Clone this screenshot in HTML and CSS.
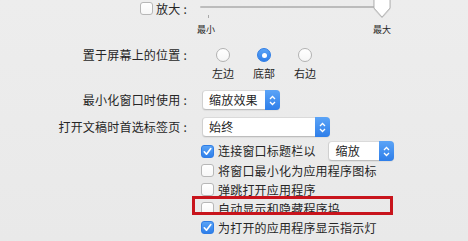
FILE: index.html
```
<!DOCTYPE html>
<html lang="zh-CN">
<head>
<meta charset="utf-8">
<link rel="stylesheet" href="styles.css">
</head>
<body>
<div class="panel">
  <div class="row row-zoom">
    <div class="label label-top"><span class="checkbox"></span><span class="gap3"></span>放大<span class="colon">:</span></div>
    <div class="slider">
      <div class="track"></div>
      <span class="tick"></span>
      <svg class="knob" width="20" height="21" viewBox="0 0 20 21"><path d="M2,-2 H18 V10 L10,19 L2,10 Z" fill="#ffffff" stroke="#b4b4b4" stroke-width="1"/></svg>
      <div class="slider-labels"><span>最小</span><span>最大</span></div>
    </div>
  </div>

  <div class="row row-position">
    <div class="label label-top">置于屏幕上的位置<span class="colon">:</span></div>
    <div class="radios">
      <div class="radio-item"><span class="radio"></span><span class="radio-label">左边</span></div>
      <div class="radio-item"><span class="radio selected"></span><span class="radio-label">底部</span></div>
      <div class="radio-item"><span class="radio"></span><span class="radio-label">右边</span></div>
    </div>
  </div>

  <div class="row row-min">
    <div class="label">最小化窗口时使用<span class="colon">:</span></div>
    <div class="popup popup-effect"><span class="value">缩放效果</span><span class="stepper"><svg width="7" height="11" viewBox="0 0 7 11"><path d="M1,4 L3.5,1.5 L6,4 M1,7 L3.5,9.5 L6,7" fill="none" stroke="#fff" stroke-width="1.3"/></svg></span></div>
  </div>

  <div class="row row-tabs">
    <div class="label">打开文稿时首选标签页<span class="colon">:</span></div>
    <div class="popup popup-tabs"><span class="value">始终</span><span class="stepper"><svg width="7" height="11" viewBox="0 0 7 11"><path d="M1,4 L3.5,1.5 L6,4 M1,7 L3.5,9.5 L6,7" fill="none" stroke="#fff" stroke-width="1.3"/></svg></span></div>
  </div>

  <div class="row row-opt row-dbl">
    <div class="opt">
      <span class="checkbox checked"><svg width="11" height="11" viewBox="0 0 11 11"><path d="M2.3,5.8 L4.5,8.2 L8.8,2.6" fill="none" stroke="#fff" stroke-width="1.7" stroke-linecap="round" stroke-linejoin="round"/></svg></span>
      <span class="opt-text">连接窗口标题栏以</span>
      <div class="popup popup-dbl"><span class="value">缩放</span><span class="stepper"><svg width="7" height="11" viewBox="0 0 7 11"><path d="M1,4 L3.5,1.5 L6,4 M1,7 L3.5,9.5 L6,7" fill="none" stroke="#fff" stroke-width="1.3"/></svg></span></div>
    </div>
  </div>

  <div class="row row-opt">
    <div class="opt"><span class="checkbox"></span><span class="opt-text">将窗口最小化为应用程序图标</span></div>
  </div>
  <div class="row row-opt">
    <div class="opt"><span class="checkbox"></span><span class="opt-text">弹跳打开应用程序</span></div>
  </div>
  <div class="row row-opt">
    <div class="opt highlight"><span class="checkbox"></span><span class="opt-text">自动显示和隐藏程序坞</span></div>
  </div>
  <div class="row row-opt">
    <div class="opt">
      <span class="checkbox checked"><svg width="11" height="11" viewBox="0 0 11 11"><path d="M2.3,5.8 L4.5,8.2 L8.8,2.6" fill="none" stroke="#fff" stroke-width="1.7" stroke-linecap="round" stroke-linejoin="round"/></svg></span>
      <span class="opt-text">为打开的应用程序显示指示灯</span>
    </div>
  </div>
</div>
</body>
</html>
```

FILE: styles.css
```
html, body {
  margin: 0;
  padding: 0;
}
body {
  width: 468px;
  height: 241px;
  overflow: hidden;
  background: linear-gradient(180deg, #ededed 0%, #e9e9e9 100%);
  font-family: "Noto Sans CJK SC", "Noto Sans", sans-serif;
  font-size: 12px;
  color: #262626;
  letter-spacing: 0.2px;
}
.panel {
  display: flex;
  flex-direction: column;
}
.row {
  display: grid;
  grid-template-columns: 188px 1fr;
  column-gap: 12px;
  align-items: center;
}
.label {
  display: flex;
  justify-content: flex-end;
  align-items: center;
  line-height: 14px;
  white-space: nowrap;
}
.label-top {
  align-self: start;
}
.colon {
  margin-left: 3px;
  margin-right: 1px;
}
.gap3 {
  width: 3px;
}

/* row 1: zoom slider */
.row-zoom {
  height: 36px;
  align-items: start;
}
.row-zoom .label {
  line-height: 17px;
}
.slider {
  position: relative;
  width: 194px;
}
.track {
  margin-top: 6px;
  width: 186px;
  height: 2px;
  border-radius: 1px;
  background: #bcbcbc;
}
.tick {
  position: absolute;
  left: 8px;
  top: 15px;
  width: 1px;
  height: 3px;
  background: #a8a8a8;
}
.knob {
  position: absolute;
  left: 172px;
  top: -2px;
  filter: drop-shadow(0 1px 0.5px rgba(0,0,0,0.12));
}
.slider-labels {
  display: flex;
  justify-content: space-between;
  margin-top: 16px;
  margin-left: -3px;
  width: 194px;
  font-size: 9px;
  line-height: 11px;
  letter-spacing: 0;
}

/* row 2: position radios */
.row-position {
  margin-top: 12px;
  align-items: start;
}
.radios {
  display: flex;
  gap: 21px;
  margin-left: 13px;
}
.radio-item {
  display: flex;
  flex-direction: column;
  align-items: center;
  width: 20px;
}
.radio {
  width: 14px;
  height: 14px;
  box-sizing: border-box;
  border-radius: 50%;
  border: 1px solid #b2b2b2;
  background: linear-gradient(#ffffff, #f6f6f6);
  display: flex;
  align-items: center;
  justify-content: center;
}
.radio.selected {
  border-color: #2f7de6;
  background: linear-gradient(#5aa3f6, #2f7fe9);
}
.radio.selected::after {
  content: "";
  width: 5px;
  height: 5px;
  border-radius: 50%;
  background: #ffffff;
}
.radio-label {
  margin-top: 5px;
  font-size: 11px;
  line-height: 13px;
  white-space: nowrap;
  letter-spacing: 0;
}

/* popups */
.popup {
  display: flex;
  align-items: center;
  height: 20px;
  box-sizing: border-box;
  background: #ffffff;
  border: 1px solid #d0d0d0;
  border-top-color: #dadada;
  border-bottom-color: #bdbdbd;
  border-radius: 4px;
  box-shadow: 0 1px 1px rgba(0,0,0,0.06);
  padding-left: 6px;
  line-height: 16px;
}
.popup .value {
  flex: 1;
  white-space: nowrap;
}
.stepper {
  align-self: stretch;
  width: 15px;
  margin: -1px -1px -1px 0;
  border-radius: 0 4px 4px 0;
  background: linear-gradient(#5ba4f7, #2e7ee9);
  display: flex;
  align-items: center;
  justify-content: center;
}
.row-min {
  margin-top: 10px;
}
.popup-effect {
  width: 78px;
  margin-left: 2px;
}
.row-tabs {
  margin-top: 7px;
}
.popup-tabs {
  width: 128px;
  margin-left: 2px;
}
.popup-dbl {
  width: 66px;
  margin-left: 12px;
  padding-left: 7px;
}

/* checkbox rows */
.row-opt {
  height: 19px;
}
.row-dbl {
  margin-top: 4px;
  height: 20px;
}
.opt {
  grid-column: 2;
  display: flex;
  align-items: center;
  height: 19px;
  margin-left: 1px;
}
.row-dbl .opt {
  height: 20px;
}
.checkbox {
  width: 13px;
  height: 13px;
  box-sizing: border-box;
  border: 1px solid #b7b7b7;
  border-radius: 3px;
  background: linear-gradient(#ffffff, #f7f7f7);
  display: inline-flex;
  align-items: center;
  justify-content: center;
  flex: none;
}
.checkbox.checked {
  border-color: #2f7de6;
  background: linear-gradient(#5aa3f6, #2f7fe9);
}
.opt-text {
  margin-left: 4px;
  white-space: nowrap;
  line-height: 14px;
}
.highlight {
  position: relative;
}
.highlight::after {
  content: "";
  position: absolute;
  left: -9px;
  top: -3px;
  width: 201px;
  height: 19px;
  box-sizing: border-box;
  border: 3px solid #c8141c;
}
```
